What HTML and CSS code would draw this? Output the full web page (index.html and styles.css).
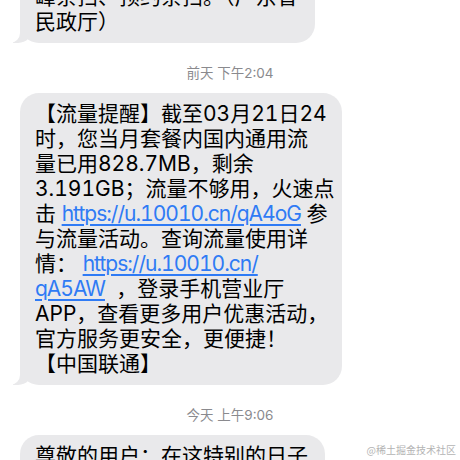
FILE: index.html
```html
<!DOCTYPE html>
<html lang="zh-CN">
<head>
<meta charset="utf-8">
<title>信息</title>
<link rel="stylesheet" href="styles.css">
</head>
<body>
<div class="thread">
  <div class="bubble bubble-first">峰祭扫、预约祭扫。（广东省<br>民政厅）</div>

  <div class="stamp">前天 下午2:04</div>

  <div class="bubble bubble-wide">【流量提醒】截至03月21日24<br>时，您当月套餐内国内通用流<br>量已用828.7MB，剩余<br>3.191GB；流量不够用，火速点<br>击 <a class="link" href="#">https://u.10010.cn/qA4oG</a> 参<br>与流量活动。查询流量使用详<br>情： <a class="link" href="#">https://u.10010.cn/</a><br><a class="link" href="#">qA5AW</a>&nbsp;&nbsp;，登录手机营业厅<br>APP，查看更多用户优惠活动，<br>官方服务更安全，更便捷！<br>【中国联通】</div>

  <div class="stamp">今天 上午9:06</div>

  <div class="bubble bubble-last">尊敬的用户：在这特别的日子<br>里，感谢您一直以来的支持。</div>
</div>
<div class="watermark">@稀土掘金技术社区</div>
</body>
</html>
```

FILE: styles.css
```css
html, body {
  margin: 0;
  padding: 0;
  background: #ffffff;
}

body {
  width: 460px;
  height: 460px;
  overflow: hidden;
  position: relative;
  font-family: Inter, "Noto Sans CJK SC", sans-serif;
}

.thread {
  display: flex;
  flex-direction: column;
  align-items: flex-start;
  margin-top: -24px;
}

.bubble {
  position: relative;
  margin-left: 20px;
  padding: 8px 17px 9px 15px;
  background: #e9e9eb;
  border-radius: 19px;
  color: #000;
  font-size: 21px;
  line-height: 25px;
  white-space: nowrap;
  font-variant-numeric: tabular-nums;
}

.bubble-wide {
  width: 290px;
}

.bubble::before {
  content: "";
  position: absolute;
  bottom: 0;
  left: -7px;
  width: 20px;
  height: 20px;
  background: #e9e9eb;
  border-bottom-right-radius: 15px;
}

.bubble::after {
  content: "";
  position: absolute;
  bottom: 0;
  left: -10px;
  width: 10px;
  height: 20px;
  background: #ffffff;
  border-bottom-right-radius: 10px;
}

.link {
  color: #2f7bf5;
  letter-spacing: -1px;
  text-decoration: underline;
  text-decoration-thickness: 1.5px;
  text-underline-offset: 3px;
}

.stamp {
  align-self: stretch;
  text-align: center;
  margin: 22px 0 12px;
  font-size: 13.5px;
  line-height: 16px;
  color: #8a8a8e;
}

.watermark {
  position: absolute;
  right: 4px;
  bottom: 4px;
  font-family: "Noto Sans CJK SC", sans-serif;
  font-size: 10px;
  line-height: 12px;
  color: #b4b4b4;
}
```
